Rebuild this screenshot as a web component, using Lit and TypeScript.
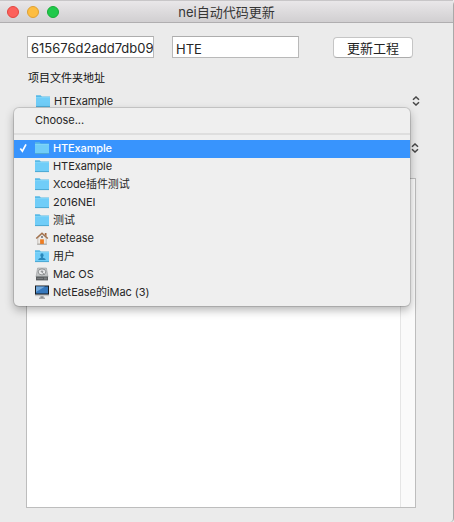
import { LitElement, html, css, svg } from "lit";
import { customElement, property } from "lit/decorators.js";
import { classMap } from "lit/directives/class-map.js";

type IconName = "folder" | "home" | "users" | "disk" | "imac";

const folder = svg`
  <path d="M0 1.2h4.6l1.2 1.3H14V13H0z" fill="#58b9e6"/>
  <path d="M0 3.6h14V12.5H0z" fill="#70cdf8"/>
  <path d="M0 3.6h14" stroke="#8bdbfb" stroke-width=".8"/>
  <path d="M0 12.6h14" stroke="#4ba5cf" stroke-width=".9"/>`;

const icons: Record<IconName, unknown> = {
  folder,
  users: svg`${folder}
    <ellipse cx="7" cy="6.3" rx="1.6" ry="2" fill="#2b87b9"/>
    <path d="M3.3 11c0-1.5 1.3-1.7 2.8-2.2V8h1.8v.8c1.5.5 2.8.7 2.8 2.2z" fill="#2b87b9"/>`,
  home: svg`
    <path d="M2.8 7 7 3.2 11.2 7v6H2.8z" fill="#eeeae5" stroke="#aaa49e" stroke-width=".6"/>
    <path d="M9.8 2h1.7v3.5L9.8 4z" fill="#a4683c"/>
    <path d="M1.2 7.6 7 2.2l5.8 5.4" fill="none" stroke="#a3724d" stroke-width="1.4"/>
    <circle cx="7" cy="5.9" r="1" fill="#6a6a70"/>
    <path d="M5.1 8.3h3.8V13H5.1z" fill="#ee7d22"/>
    <path d="M2 13.3h10" stroke="#99958f" stroke-width=".7"/>`,
  disk: svg`
    <path d="M2.6 1h8.8L13 10H1z" fill="#c3c5c6" stroke="#9b9d9f" stroke-width=".6"/>
    <ellipse cx="7" cy="4.9" rx="3.8" ry="3" fill="#e9eaeb" stroke="#7f8183" stroke-width=".8"/>
    <ellipse cx="7" cy="4.4" rx="1.4" ry=".9" fill="#96989a"/>
    <path d="m6.8 5 2.6 2.6" stroke="#77797b" stroke-width=".8"/>
    <path d="M1 9.4h12v4H1z" fill="#5b5e60"/>
    <path d="M1 9.4h12" stroke="#8d9092" stroke-width=".7"/>
    <path d="M2 11.4h6" stroke="#8b8e90" stroke-width=".7"/>
    <path d="M9 10.5h3v2H9z" fill="#7b7e80"/>`,
  imac: svg`
    <path d="M0 .5h14v10H0z" fill="#191b1e"/>
    <path d="M1 1.5h12v7H1z" fill="#3678bd"/>
    <path d="M1 1.5h9L1 7z" fill="#73a8da"/>
    <path d="M0 9.5h14v1.7H0z" fill="#c5c7c9"/>
    <path d="M5.4 11.2h3.2v1.7H5.4z" fill="#8f9193"/>
    <path d="M4 13.2h6" stroke="#6c6e70" stroke-width=".8"/>`,
};

@customElement("file-entry")
class FileEntry extends LitElement {
  @property() icon: IconName = "folder";
  @property() label = "";
  static styles = css`
    :host { display: flex; align-items: center; gap: 4px; height: 18px; white-space: nowrap; }
    svg { width: 14px; height: 14px; flex: none; }
    .label { line-height: 18px; }
  `;
  render() {
    return html`<svg viewBox="0 0 14 14">${icons[this.icon]}</svg><span class="label">${this.label}</span>`;
  }
}

@customElement("app-root")
class AppRoot extends LitElement {
  private entries: { icon: IconName; label: string; selected?: boolean }[] = [
    { icon: "folder", label: "HTExample", selected: true },
    { icon: "folder", label: "HTExample" },
    { icon: "folder", label: "Xcode插件测试" },
    { icon: "folder", label: "2016NEI" },
    { icon: "folder", label: "测试" },
    { icon: "home", label: "netease" },
    { icon: "users", label: "用户" },
    { icon: "disk", label: "Mac OS" },
    { icon: "imac", label: "NetEase的iMac (3)" },
  ];

  static styles = css`
    :host {
      display: block; width: 454px; height: 522px; overflow: hidden; position: relative;
      background: #ebebeb; color: #262626;
      font: 11px/18px Inter, "Noto Sans CJK SC", sans-serif;
      letter-spacing: -0.05px;
    }
    * { box-sizing: border-box; }
    .window {
      display: flex; flex-direction: column; height: 522px;
      border-right: 1px solid #a9a9a9; border-radius: 5px 5px 4px 4px;
    }
    .titlebar {
      height: 23px; flex: none; display: grid; grid-template-columns: 1fr auto 1fr; align-items: center;
      padding: 1px 0 0 7px; background: linear-gradient(#e9e7e9, #d1cfd1);
      border-top: 1px solid #c8c6c8; border-bottom: 1px solid #b0aeb0;
    }
    .lights { display: flex; gap: 8px; }
    .light { width: 12px; height: 12px; border-radius: 50%; border: 1px solid #e2463f; background: #fc605b; }
    .light.min { border-color: #dfa032; background: #fdbd40; }
    .light.max { border-color: #18ac36; background: #20c94b; }
    .title { font-size: 13px; letter-spacing: 0; color: #353535; margin-right: 7px; }
    .form { display: flex; padding: 13px 40px 0 27px; height: 35px; }
    .field {
      width: 127px; height: 22px; background: #fff; border: 1px solid #b9b9b9; border-top-color: #adadad;
      padding: 0 0 0 3px; font-size: 13px; line-height: 23px; letter-spacing: 0;
    }
    .clip { overflow: hidden; white-space: nowrap; height: 20px; }
    .field + .field { margin-left: 18px; line-height: 24px; }
    .button {
      margin: 1px 0 0 34px; width: 80px; height: 21px; border-radius: 4px; background: #fff;
      border: 1px solid #c5c5c5; border-bottom-color: #acacac; font: inherit; font-size: 13px; line-height: 20px;
      letter-spacing: 0; padding: 0; color: #222; text-align: center;
    }
    .caption { margin: 11px 0 0 28px; height: 17px; color: #111; letter-spacing: 0; }
    .path { display: flex; justify-content: space-between; align-items: center; height: 18px; margin: 6px 33px 0 36px; }
    .path.second { margin: 29px 34px 0 36px; }
    .stepper { width: 8px; height: 10px; fill: none; stroke: #484848; stroke-width: 1.5; }
    .output {
      margin: 21px 37px 0 26px; height: 330px; background: #fff; border: 1px solid #bdbdbd;
      display: flex; justify-content: flex-end;
    }
    .track { width: 15px; background: #fafafa; border-left: 1px solid #e5e5e5; }
    .menu {
      position: absolute; left: 14px; top: 108px; width: 396px; height: 198px; padding: 3px 0 4px;
      border-radius: 5px; background: #efefef;
      box-shadow: 0 0 0 1px rgba(0,0,0,.13), 0 4px 10px rgba(0,0,0,.3);
    }
    .choose { padding-left: 21px; height: 18px; }
    .separator { height: 2px; margin: 4px 0 5px; background: #dedede; }
    .item { display: flex; height: 18px; }
    .item file-entry { height: 16px; }
    .check { width: 21px; padding: 3px 0 0 5px; }
    .check svg { display: block; width: 9px; height: 10px; }
    .selected { color: #fff; background: #3894fd; font-weight: 500; letter-spacing: -0.15px; }
  `;

  private stepper() {
    return html`<svg class="stepper" viewBox="0 0 8 10"><path d="M1 3.8 4 1l3 2.8M1 6.2 4 9l3-2.8" /></svg>`;
  }

  render() {
    return html`
      <div class="window">
        <div class="titlebar">
          <div class="lights"><i class="light"></i><i class="light min"></i><i class="light max"></i></div>
          <div class="title">nei自动代码更新</div>
        </div>
        <div class="form">
          <div class="field"><div class="clip">615676d2add7db09</div></div>
          <div class="field"><div class="clip">HTE</div></div>
          <button class="button">更新工程</button>
        </div>
        <div class="caption">项目文件夹地址</div>
        <div class="path"><file-entry icon="folder" label="HTExample"></file-entry>${this.stepper()}</div>
        <div class="path second"><span></span>${this.stepper()}</div>
        <div class="output"><div class="track"></div></div>
      </div>
      <div class="menu">
        <div class="choose">Choose...</div>
        <div class="separator"></div>
        ${this.entries.map(
          (e) => html`<div class=${classMap({ item: true, selected: !!e.selected })}>
            <span class="check">${e.selected
              ? html`<svg viewBox="0 0 9 10"><path d="m1.3 5.4 2.1 2.8L7 1.3" fill="none" stroke="#fff" stroke-width="1.7" /></svg>`
              : ""}</span>
            <file-entry icon=${e.icon} label=${e.label}></file-entry>
          </div>`
        )}
      </div>
    `;
  }
}
